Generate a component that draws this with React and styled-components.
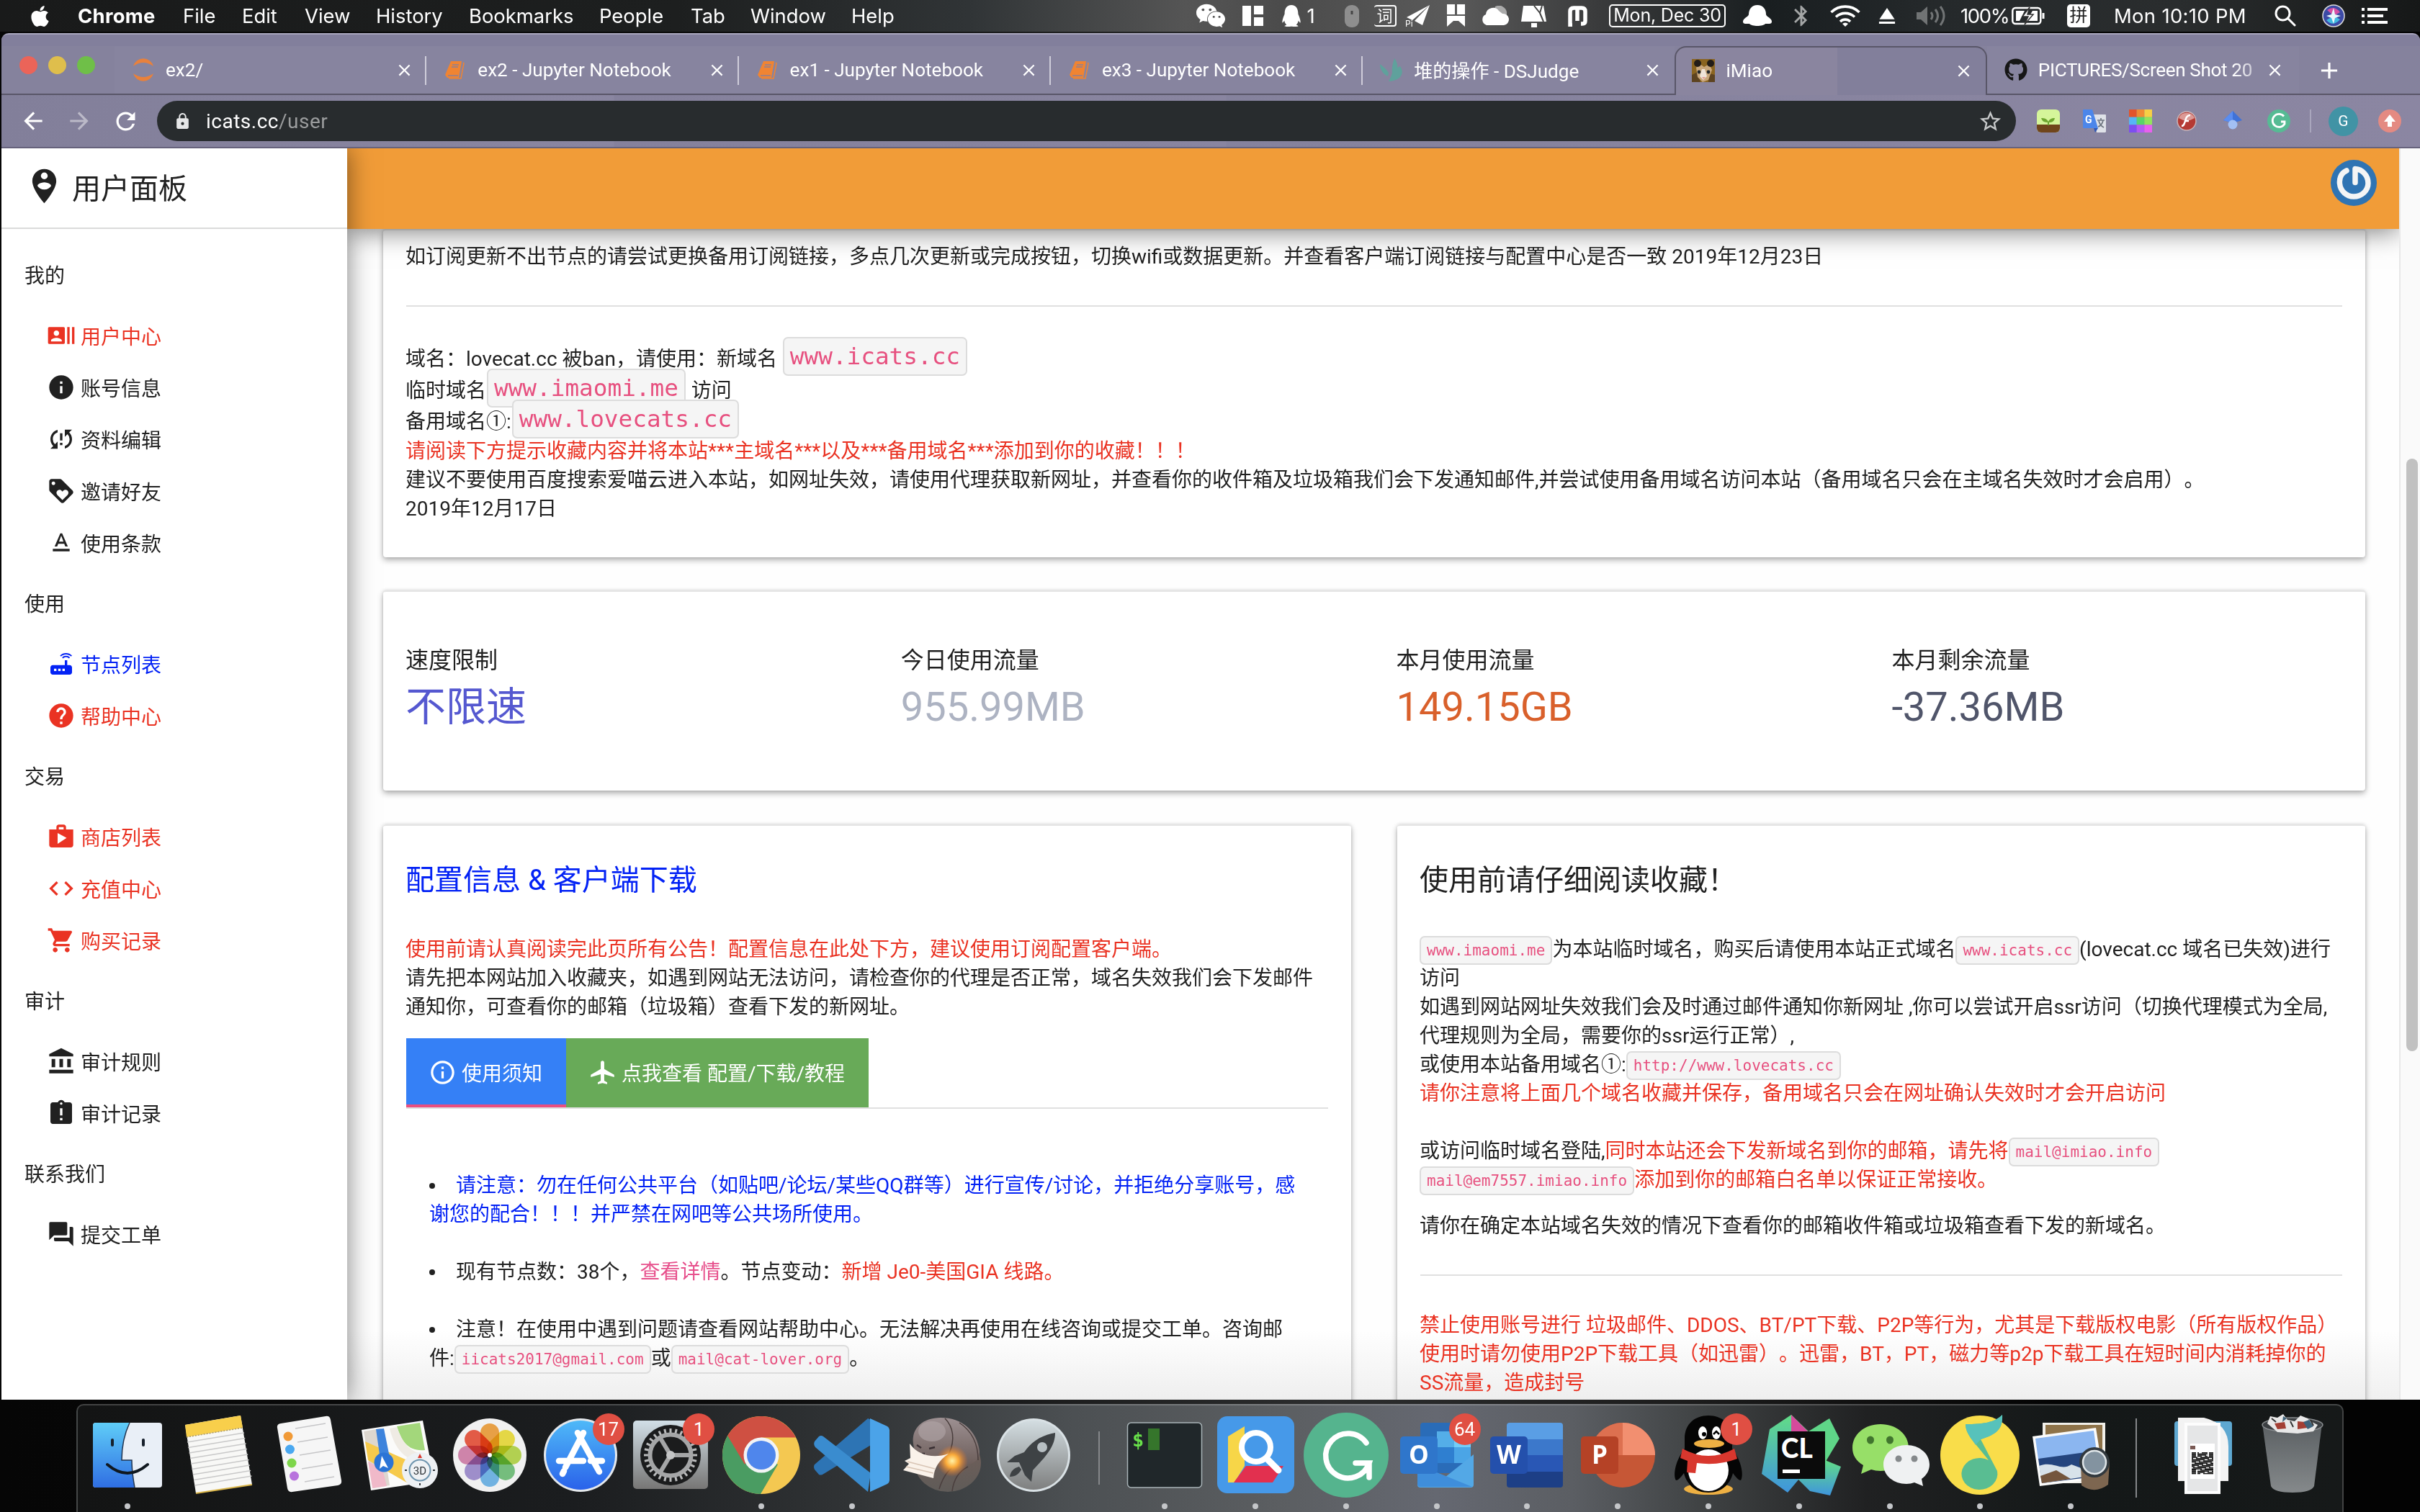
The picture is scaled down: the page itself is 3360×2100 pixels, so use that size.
import React from 'react';
import styled, { createGlobalStyle, css } from 'styled-components';
import {
  MdRecentActors, MdInfo, MdSyncProblem, MdLoyalty, MdTextFormat, MdRouter, MdHelp, MdShop, MdCode,
  MdShoppingCart, MdAccountBalance, MdAssignmentLate, MdQuestionAnswer, MdPersonPinCircle,
  MdOutlineInfo, MdLocalAirport, MdLock, MdStarBorder, MdEject, MdBluetooth, MdClose, MdAdd,
  MdArrowBack, MdArrowForward, MdRefresh,
} from 'react-icons/md';
import { FaApple, FaGithub, FaWeixin, FaQq } from 'react-icons/fa';

const Global = createGlobalStyle`
  * { box-sizing: border-box; }
  html, body { margin: 0; padding: 0; background: #000; overflow: hidden; }
  body { font-family: Roboto, "Noto Sans CJK SC", sans-serif; color: #212121; text-spacing-trim: space-all; }
  svg { display: block; flex: none; }
`;

const Desktop = styled.div`
  width: 3360px;
  height: 2100px;
  display: flex;
  flex-direction: column;
  background: linear-gradient(90deg, #060606 0%, #0a0a0a 30%, #2c2d2e 55%, #1c1c1c 70%, #030303 85%);
  overflow: hidden;
`;

/* ---------- system menu bar ---------- */
const MenuBar = styled.header`
  height: 44px;
  flex: none;
  display: flex;
  align-items: center;
  color: #fff;
  font-family: Inter, "Noto Sans CJK SC", sans-serif;
  font-size: 27.4px;
  background: linear-gradient(90deg, #191a1a 0%, #1d1f1f 28%, #303436 40%, #555 49%, #4b4b4b 53%, #5a5a5a 60%, #3a3b3c 66%, #191e20 73%, #25292b 80%, #2a2d2e 90%, #161818 100%);
`;
const Slot = styled.div`
  width: ${(p) => p.$w}px;
  margin-left: ${(p) => p.$ml || 0}px;
  flex: none;
  height: 44px;
  display: flex;
  align-items: center;
  justify-content: ${(p) => (p.$left ? 'flex-start' : 'center')};
  white-space: nowrap;
  font-weight: ${(p) => (p.$bold ? 700 : 400)};
  letter-spacing: ${(p) => p.$ls || 0}px;
  opacity: ${(p) => p.$o || 1};
`;
const DateBox = styled.span`
  width: 162px;
  height: 32px;
  border: 2.5px solid #fff;
  border-radius: 5px;
  font-size: 25px;
  line-height: 27px;
  text-align: center;
  letter-spacing: -0.2px;
`;
const InputBox = styled.span`
  width: 32px;
  height: 32px;
  background: #fff;
  color: #222;
  border-radius: 5px;
  font-size: 25px;
  line-height: 31px;
  text-align: center;
`;
const OutlineGlyph = styled.span`
  width: 31px;
  height: 30px;
  border: 2px solid #fff;
  border-left: 0;
  border-radius: 4px;
  font-size: 22px;
  line-height: 27px;
  text-align: center;
`;

/* ---------- browser ---------- */
const Browser = styled.div`
  height: 1898px;
  margin: 2px 0 0 2px;
  flex: none;
  display: flex;
  flex-direction: column;
  background: #85829d;
  border-top: 2px solid #aaa8bf;
  border-radius: 10px 10px 0 0;
  overflow: hidden;
`;
const TabStrip = styled.div`
  height: 84px;
  flex: none;
  display: flex;
  align-items: flex-end;
  background: linear-gradient(180deg, #827f9c 0 16px, #85829d 16px);
`;
const Lights = styled.div`
  width: 157px;
  height: 84px;
  padding-left: 25px;
  flex: none;
  display: flex;
  align-items: center;
  gap: 15px;
  box-shadow: inset 0 -2px #595668;
`;
const Light = styled.span`
  width: 25px;
  height: 25px;
  border-radius: 50%;
  background: ${(p) => p.$c};
`;
const TabItem = styled.div`
  width: 433.3px;
  height: 68px;
  flex: none;
  display: flex;
  align-items: center;
  padding: 0 ${(p) => (p.$fade ? 20 : 17)}px 2px 24px;
  color: #fff;
  background: #87849f;
  font-size: 26.1px;
  ${(p) =>
    p.$active
      ? css`
          border: 2px solid #595668;
          border-bottom: 0;
          border-radius: 16px 16px 0 0;
          background: linear-gradient(90deg, #8a859f 0 52%, #827f9b 52%);
          padding-left: 22px;
        `
      : css`
          box-shadow: inset 0 -2px #595668;
        `}
`;
const TabIcon = styled.span`
  width: 32px;
  height: 32px;
  margin-right: 15px;
  flex: none;
`;
const TabTitle = styled.span`
  flex: 1;
  white-space: nowrap;
  ${(p) => p.$fade && css`
    letter-spacing: -0.35px;
    mask-image: linear-gradient(90deg, #000 86%, rgba(0, 0, 0, 0.3) 100%);
  `}
`;
const TabDivider = styled.span`
  width: 2px;
  height: 40px;
  margin-left: -2px;
  margin-bottom: 14px;
  background: #cfcdda;
  z-index: 1;
`;
const StripEnd = styled.div`
  flex: 1;
  height: 68px;
  display: flex;
  align-items: center;
  padding-left: 23px;
  box-shadow: inset 0 -2px #595668;
  color: #fff;
`;
const Toolbar = styled.div`
  height: 74px;
  flex: none;
  display: flex;
  align-items: center;
  color: #fff;
  padding-left: 24px;
  background: linear-gradient(90deg, #827f9a 0, #8a86a1 850px, #85819c 851px, #8985a0 1700px, #85829d 1701px, #8b86a2 100%);
  border-bottom: 2px solid #66627c;
`;
const NavButton = styled.span`
  width: 40px;
  margin-right: 24px;
  flex: none;
  display: flex;
  justify-content: center;
  opacity: ${(p) => (p.$dim ? 0.45 : 1)};
`;
const Omnibox = styled.div`
  width: 2581px;
  height: 56px;
  flex: none;
  display: flex;
  align-items: center;
  padding: 0 18px 0 23px;
  border-radius: 28px;
  background: #282c2e;
  color: #fff;
  font-size: 28px;
`;
const Address = styled.span`
  flex: 1;
  margin-left: 20px;
  letter-spacing: 0.5px;
`;
const Muted = styled.span`
  color: #9b9d9e;
`;
const Extensions = styled.div`
  display: flex;
  align-items: center;
  gap: 32px;
  margin-left: 29px;
`;
const ExtDivider = styled.span`
  width: 2px;
  height: 32px;
  margin: 0 -8px 0 -5px;
  background: #a9a6bd;
`;
const Avatar = styled.span`
  width: 41px;
  height: 41px;
  border-radius: 50%;
  background: #4193a5;
  font-size: 21px;
  line-height: 41px;
  text-align: center;
  margin-right: -4px;
`;

/* ---------- page ---------- */
const Page = styled.div`
  height: 1738px;
  flex: none;
  display: flex;
  background: #fff;
`;
const Sidebar = styled.nav`
  width: 480px;
  flex: none;
  position: relative;
  z-index: 3;
  background: #fff;
  box-shadow: 0 0 34px rgba(0, 0, 0, 0.5);
  clip-path: inset(0 -60px 0 0);
`;
const Brand = styled.div`
  height: 112px;
  display: flex;
  align-items: center;
  padding: 0 0 5px 31px;
  border-bottom: 2px solid #dadbda;
  font-size: 40px;
  margin-bottom: 18px;
`;
const BrandText = styled.span`
  margin: 1px 0 0 10px;
`;
const GroupTitle = styled.div`
  height: 96px;
  padding-left: 32px;
  font-size: 28px;
  line-height: 96px;
`;
const MenuLink = styled.div`
  height: 72px;
  display: flex;
  align-items: center;
  padding: 1px 0 0 63px;
  font-size: 28px;
  line-height: 71px;
  color: ${(p) => p.$c || '#212121'};
  svg { margin: -6px 7px 0 0; }
`;
const Main = styled.div`
  flex: 1;
  min-width: 0;
  display: flex;
  flex-direction: column;
`;
const TopBar = styled.div`
  height: 112px;
  flex: none;
  position: relative;
  z-index: 2;
  display: flex;
  justify-content: flex-end;
  padding: 16px 31px 0 0;
  background: #f19c38;
  box-shadow: 0 4px 34px rgba(0, 0, 0, 0.5);
  clip-path: inset(0 0 -60px 0);
`;
const Content = styled.main`
  flex: 1;
  display: flex;
  flex-direction: column;
  padding: 0 47px 0 50px;
  overflow: hidden;
  background: linear-gradient(180deg, #fefefe 1530px, #f0f0f0 1626px);
`;
const Card = styled.section`
  height: ${(p) => p.$h}px;
  width: ${(p) => (p.$w ? `${p.$w}px` : 'auto')};
  margin-bottom: ${(p) => p.$mb || 0}px;
  flex: none;
  padding: ${(p) => p.$pt}px 32px 0 31px;
  border-top: 2px solid #e5e5e5;
  border-radius: 4px;
  background: ${(p) => (p.$shade ? 'linear-gradient(180deg, #fff 700px, #eeeeee 799px)' : '#fff')};
  box-shadow: 0 4px 8px rgba(0, 0, 0, 0.3), 0 0 4px rgba(0, 0, 0, 0.12);
`;
const Columns = styled.div`
  display: flex;
  justify-content: space-between;
`;
const Line = styled.div`
  height: ${(p) => p.$h || 40}px;
  margin-top: ${(p) => p.$mt || 0}px;
  display: flex;
  align-items: center;
  white-space: pre;
  font-size: 28px;
  line-height: 40px;
  color: ${(p) => p.$c || 'inherit'};
`;
const Tint = styled.span`
  color: ${(p) => p.$c};
`;
const Chip = styled.code`
  height: ${(p) => (p.$big ? 54 : 40)}px;
  margin: ${(p) => (p.$big ? '-8px 1px 0' : '2px 0 0')};
  flex: none;
  display: flex;
  align-items: center;
  padding: 0 8px;
  border: 2px solid #dcdcdc;
  border-radius: 7px;
  background: #f5f5f5;
  color: #e7507f;
  font-family: "DejaVu Sans Mono", monospace;
  font-size: ${(p) => (p.$big ? 32.7 : 21)}px;
`;
const Rule = styled.hr`
  height: 2px;
  margin: ${(p) => p.$mt}px 0 0 1px;
  border: 0;
  background: #e0e0e0;
`;
const Heading = styled.h2`
  height: 60px;
  margin: 0 0 46px;
  font-size: 40px;
  font-weight: 400;
  line-height: 60px;
  color: ${(p) => p.$c || 'inherit'};
`;
const Stats = styled.div`
  display: grid;
  grid-template-columns: repeat(4, 687.8px);
`;
const StatLabel = styled.div`
  font-size: 32px;
  line-height: 48px;
`;
const StatValue = styled.div`
  margin-top: 1px;
  font-size: 56px;
  line-height: 80px;
  color: ${(p) => p.$c};
`;
const TabBar = styled.div`
  height: 98px;
  margin: 23px 0 0 1px;
  display: flex;
  border-bottom: 2px solid #e0e0e0;
  color: #fff;
  font-size: 28px;
`;
const TabButton = styled.div`
  width: ${(p) => p.$w}px;
  height: 96px;
  display: flex;
  align-items: center;
  padding: 0 0 2px 31px;
  background: ${(p) => p.$bg};
  box-shadow: ${(p) => (p.$active ? 'inset 0 -4px #ea4f80' : 'none')};
  white-space: nowrap;
  svg { margin-right: 7px; }
`;
const Notices = styled.div`
  padding: 87px 0 0 33px;
`;
const Bullet = styled.span`
  width: 8px;
  height: 8px;
  margin-right: 29px;
  border-radius: 50%;
  background: #212121;
`;
const ScrollTrack = styled.div`
  width: 29px;
  flex: none;
  padding: 431px 0 0 8px;
  border-left: 2px solid #e8e8e8;
  background: #fafafa;
`;
const ScrollThumb = styled.div`
  width: 16px;
  height: 823px;
  border-radius: 8px;
  background: #c1c1c1;
`;

/* ---------- dock ---------- */
const Dock = styled.footer`
  width: 3148px;
  height: 150px;
  margin: 6px 0 0 106px;
  padding-left: 5.6px;
  flex: none;
  display: flex;
  border: 2px solid rgba(255, 255, 255, 0.2);
  border-bottom: 0;
  border-radius: 10px 10px 0 0;
  background: linear-gradient(90deg, #131414 0%, #1b1d1f 22%, #303335 34%, #4c5053 44%, #5b5e61 53%, #656871 60%, #5b5e63 66%, #3e4142 72%, #202122 79%, #141818 88%, #161919 100%);
`;
const DockSlot = styled.div`
  width: 125.8px;
  height: 148px;
  margin-top: -2px;
  flex: none;
  position: relative;
`;
const RunDot = styled.span`
  position: absolute;
  left: 59px;
  top: 138px;
  width: 8px;
  height: 8px;
  border-radius: 50%;
  background: #c4c6c9;
`;
const DockBadge = styled.span`
  position: absolute;
  left: 80px;
  top: 13px;
  width: 44px;
  height: 44px;
  border-radius: 22px;
  background: #e04f43;
  color: #fff;
  font-size: 26px;
  line-height: 44px;
  text-align: center;
`;
const DockDivider = styled.span`
  width: 2px;
  height: ${(p) => p.$h}px;
  margin: ${(p) => p.$mt}px 27.4px 0;
  flex: none;
  background: #85878a;
`;

const RED = '#ea3323';
const BLUE = '#0322f5';

/* ---------- small drawings ---------- */
const JupyterRing = () => (
  <svg width="32" height="32" viewBox="0 0 32 32">
    <path d="M2 11a14.5 14.5 0 0 1 28 0Q16 1 2 11zM2 21a14.5 14.5 0 0 0 28 0Q16 31 2 21z" fill="#e8813c" />
  </svg>
);
const NotebookIcon = () => (
  <svg width="32" height="32" viewBox="0 0 32 32" fill="#f08432">
    <path d="M10 4h15l-4 23H5l-3-4z" />
    <path d="M27 6l1 1-4 21H7" fill="none" stroke="#f08432" strokeWidth="1.5" />
    <path d="M12 9h9M11 12h9M6 24h14" stroke="#8a7f96" strokeWidth="1.6" />
  </svg>
);
const JudgeIcon = () => (
  <svg width="32" height="32" viewBox="0 0 32 32" fill="#5fa19c">
    <path d="M0 8c4 3 9 7 12 12l-1 5C4 22 0 15 0 8zM20 0c3 4 5 9 4 13l4-2c5 7 3 14-4 18-4 2-9 3-12 3 2-4 4-8 5-12-1-7 1-14 3-20z" />
  </svg>
);
const CatIcon = () => (
  <svg width="32" height="32" viewBox="0 0 32 32">
    <rect width="32" height="32" fill="#8a6420" />
    <path d="M0 22l8-4 4 14H0zM24 20l8 2v10h-9z" fill="#5d4320" />
    <path d="M6 12l4-6 7 5 7-4 4 8-5 14-8 3-7-7z" fill="#c9a77c" />
    <path d="M14 14l4 0 3 10-5 5-5-5z" fill="#efe4da" />
    <ellipse cx="8" cy="6" rx="5" ry="5" fill="#221c18" />
    <ellipse cx="26" cy="6" rx="5" ry="5" fill="#221c18" />
    <circle cx="10" cy="18" r="2.4" fill="#20262b" />
    <circle cx="23" cy="18" r="2.4" fill="#20262b" />
    <path d="M14 25h5l-2.500 3z" fill="#e59a94" />
  </svg>
);
const PowerLogo = () => (
  <svg width="64" height="64" viewBox="0 0 64 64">
    <circle cx="32" cy="32" r="32" fill="#2f74b3" />
    <path d="M22 15C13 19 12 28 12.500 33c1 10 9 18 19.500 18s20-8 20-18.500C52 22 44 13 34 12.500v19" fill="none" stroke="#f4f5f5" strokeWidth="7.500" strokeLinecap="round" strokeLinejoin="round" />
  </svg>
);

const ext = [
  <svg key="a" width="32" height="32" viewBox="0 0 32 32">
    <rect width="32" height="32" rx="6" fill="#d5f59a" />
    <path d="M0 21h32v5a6 6 0 0 1-6 6H6a6 6 0 0 1-6-6z" fill="#70451b" />
    <path d="M15 22v-4C9 18 7 15 6 12c5 0 8 1 10 5 1-3 4-5 9-5-1 4-3 6-8 6v4z" fill="#6ea62f" />
  </svg>,
  <svg key="b" width="32" height="32" viewBox="0 0 32 32">
    <path d="M14 7h17a1 1 0 0 1 1 1v23l-1 1H19z" fill="#dfe2e8" />
    <path d="M0 0h13l8 26H1a1 1 0 0 1-1-1z" fill="#4c86ea" />
    <path d="M15 26h6l-4 6z" fill="#3058b5" />
    <path d="M20 15h10M25 12v3m3 0c-1 5-4 8-7 9m1-8c1 4 3 7 7 9" stroke="#6f7680" strokeWidth="1.700" fill="none" />
    <text x="3" y="19" fontFamily="Roboto" fontWeight="700" fontSize="14" fill="#fff">G</text>
  </svg>,
  <svg key="c" width="32" height="32" viewBox="0 0 32 32">
    {['#e2542c', '#ef8c34', '#f6cf45', '#57b5f5', '#58d46b', '#92e35b', '#7d4ef0', '#b45af3', '#e860ee'].map((c, i) => (
      <rect key={c} x={(i % 3) * 10.7} y={Math.floor(i / 3) * 10.7} width="10.7" height="10.7" fill={c} />
    ))}
  </svg>,
  <svg key="d" width="32" height="32" viewBox="0 0 32 32">
    <circle cx="16" cy="16" r="13" fill="#b53a33" stroke="#c9b4b8" strokeWidth="1.500" />
    <path d="M5 12a12 12 0 0 1 22 0q-11 7-22 0z" fill="#dc9a96" />
    <path d="M21 8c-6 0-6 6-8 11-1 3-2 4-4 4M13 16h6" fill="none" stroke="#fff" strokeWidth="2.500" />
  </svg>,
  <svg key="e" width="32" height="32" viewBox="0 0 32 32">
    <path d="M16 2l13 13-13 4L3 15z" fill="#3f72d8" />
    <path d="M16 2v17L3 15z" fill="#5a8df0" />
    <circle cx="16" cy="21" r="6.500" fill="#a3c0f4" />
  </svg>,
  <svg key="f" width="32" height="32" viewBox="0 0 32 32">
    <circle cx="16" cy="16" r="16" fill="#56bb94" />
    <path d="M23 9.500A9 9 0 1 0 24 20v-3h-5" fill="none" stroke="#fff" strokeWidth="2.800" />
  </svg>,
];

/* ---------- dock icon drawings, on a 126 x 150 slot ---------- */
const petals = ['#f5a94a', '#f2e44a', '#bddc55', '#7cc884', '#78bdee', '#a796d6', '#da8cb4', '#f0604a'];
const teeth = Array.from({ length: 28 }, (_, i) => (i * 360) / 28);
const isCorner = (x, y) => (x < 4 && y < 4) || (x > 10 && y < 4) || (x < 4 && y > 14);
const qrCells = Array.from({ length: 15 * 19 }, (_, i) => [i % 15, Math.floor(i / 15)])
  .filter(([x, y]) => (isCorner(x, y) ? x % 4 !== 3 : (x * x * 3 + y * y * 5 + x * y * 7) % 11 < 6));
const art = {
  finder: (
    <>
      <rect x="15" y="26" width="96" height="90" rx="4" fill="#e9eff7" />
      <path d="M19 26h47c-8 17-11 35-11 52h14c0 13 2 27 4 38H19a4 4 0 0 1-4-4V30a4 4 0 0 1 4-4z" fill="url(#gFinder)" />
      <path d="M66 26c-8 17-11 35-11 52h14c0 13 2 27 4 38" fill="none" stroke="#20344f" strokeWidth="1.500" />
      <path d="M42 50v7M85 50v7" stroke="#16202c" strokeWidth="4" strokeLinecap="round" />
      <path d="M35 84q28 24 56 0" fill="none" stroke="#101820" strokeWidth="4" strokeLinecap="round" />
    </>
  ),
  notes: (
    <>
      <path d="M18 29l77-13 16 96-78 12z" fill="#f8f8f6" />
      <path d="M18 29l77-13 3 17-78 13z" fill="#f8cf4b" />
      <path d="M20 46l78-13" stroke="#a89a70" strokeWidth="1.500" strokeDasharray="2 2" />
      {Array.from({ length: 9 }, (_, i) => (
        <path key={i} d={`M${21 + i * 1.3} ${53 + i * 7.5}l79-13`} stroke="#c9c9c9" strokeWidth="1.500" />
      ))}
      <path d="M33 124l78-12" stroke="#d9b549" strokeWidth="2" />
    </>
  ),
  reminders: (
    <>
      <path d="M25 27l62-10q6-1 7 5l15 84q1 6-5 7l-63 9q-6 1-7-5L20 33q-1-5 5-6z" fill="#f6f6f6" />
      {[['#f19a37', 35, 45], ['#4aa8f0', 37.5, 63], ['#7ed64b', 40, 82], ['#b873dd', 43.5, 100]].map(([c, x, y]) => (
        <circle key={c} cx={x} cy={y} r="6.500" fill={c} />
      ))}
      <path d="M45 34l42-7M48 53l42-7M51 71l43-7M54 90l43-7M58 108l41-7" stroke="#c6c6c8" strokeWidth="1.500" />
    </>
  ),
  maps: (
    <>
      <path d="M11 36l85-13 16 84-88 13z" fill="#fbfbfa" />
      <path d="M14 38l24-4 12 79-23 4z" fill="#ddd7cf" />
      <path d="M16 52l76 34 12 21-27 4L20 78z" fill="#f6ca4c" />
      <path d="M60 31l32-5 7 38c-24 2-32-12-39-33z" fill="#a3d77b" />
      <path d="M50 34l10-2c7 21 20 38 40 37l2 14c-30-3-45-20-52-49z" fill="#efebe4" />
      <path d="M20 80l20 10 6 24-20 3z" fill="#f0b9c9" />
      <path d="M31 35l11-1 10 50H38z" fill="#3d83dc" />
      <circle cx="42" cy="81" r="13.500" fill="#2b74d6" />
      <path d="M39 72l9 17-7-3-5 4z" fill="#fff" />
      <circle cx="92" cy="92" r="25" fill="#eef1f4" />
      <circle cx="92" cy="92" r="14.500" fill="none" stroke="#6c93ad" strokeWidth="2" />
      <path d="M92 69l3 6h-6z" fill="#d9372c" />
      <path d="M71 92h3M110 92h3M92 110v3" stroke="#30363b" strokeWidth="2" />
      <text x="92" y="98" textAnchor="middle" fontFamily="Roboto" fontSize="15" fill="#30363b">3D</text>
    </>
  ),
  photos: (
    <>
      <circle cx="63" cy="71" r="51" fill="#f1f1f1" />
      {petals.map((c, i) => (
        <rect key={c} x="50" y="27" width="26" height="44" rx="13" fill={c} style={{ mixBlendMode: 'multiply' }} transform={`rotate(${i * 45} 63 71)`} />
      ))}
      <circle cx="63" cy="71" r="3" fill="#fff" />
    </>
  ),
  appstore: (
    <>
      <circle cx="63" cy="71" r="51" fill="#e4e8ec" />
      <circle cx="63" cy="71" r="48" fill="url(#gStore)" />
      <path d="M67 40L42 88M59 40l30 54M33 79h34M77 79h16M40 93l-2 4" stroke="#fff" strokeWidth="8.500" strokeLinecap="round" fill="none" />
    </>
  ),
  prefs: (
    <>
      <rect x="11" y="23" width="104" height="95" rx="5" fill="url(#gPref)" />
      <circle cx="63" cy="71" r="42" fill="#1b1c1d" />
      {teeth.map((a) => (
        <rect key={a} x="61.500" y="34" width="3" height="8" fill="#b9babb" transform={`rotate(${a} 63 71)`} />
      ))}
      <circle cx="63" cy="71" r="28.500" fill="none" stroke="#a5a6a7" strokeWidth="6" />
      <path d="M63 71h28M63 71L48 46M63 71L48 96" stroke="#a5a6a7" strokeWidth="6" />
      <circle cx="63" cy="71" r="6" fill="#c4c5c6" />
    </>
  ),
  chrome: (
    <>
      <circle cx="63" cy="71" r="54" fill="#f4c851" />
      <path d="M63 71L16.200 44A54 54 0 0 0 62 125l24-41z" fill="#4a9c62" />
      <path d="M63 46.500h48A54 54 0 0 0 16.200 44L40 84z" fill="#cf5042" />
      <circle cx="63" cy="71" r="24.500" fill="#f2f4f5" />
      <circle cx="63" cy="71" r="20" fill="#4f86ec" />
    </>
  ),
  vscode: (
    <>
      <path d="M11 84l74-64 9 4v30L22 98q-3 1-5 0l-6-7q-2-4 0-7z" fill="#2d74b4" />
      <path d="M11 52l6-7q3-2 6 0l66 51-4 26L12 60q-3-4-1-8z" fill="#3a8ccf" />
      <path d="M88 20l24 11q3 2 3 5v70q0 3-3 5l-24 11z" fill="#4ba3e9" />
    </>
  ),
  bear: (
    <>
      <ellipse cx="70" cy="82" rx="46" ry="40" fill="url(#gBody)" />
      <path d="M22 55c-3-22 14-36 38-36 30 0 50 18 54 46 1 14-8 22-44 22S24 72 22 55z" fill="url(#gHead)" />
      <ellipse cx="48" cy="38" rx="19" ry="14" fill="#b3a6a8" opacity="0.600" />
      <path d="M66 20c12 12 14 30 6 48M86 26c18 12 26 30 26 52M58 118c6-20 16-30 26-34M76 121c2-16 10-28 22-34" fill="none" stroke="#4a3e3d" strokeWidth="1.500" />
      <path d="M27 57l6 4M52 60l-8 2M34 69h4" stroke="#3a2f33" strokeWidth="2.500" />
      <circle cx="76" cy="79" r="22" fill="url(#gFire)" />
      <path d="M17 55c12 17 34 21 54 14-14 10-20 20-21 34l-42-11 8-9-6-4 8-4z" fill="#faf2ea" />
      <path d="M14 80l38 10M12 87l38 9" stroke="#d8c4b4" strokeWidth="1.500" />
    </>
  ),
  launchpad: (
    <>
      <circle cx="63" cy="71" r="51" fill="#d9e1e5" />
      <circle cx="63" cy="71" r="48" fill="url(#gLaunch)" />
      <path d="M93 40C74 43 59 53 50 67l-13 5-11 9 17 0 8 18 9 9 2-16 11-12c12-13 20-25 20-40zM43 87c-8 2-12 7-13 14 8 0 13-4 16-10z" fill="#3e4245" />
      <circle cx="75" cy="60" r="7" fill="#b7bfc3" />
    </>
  ),
  terminal: (
    <>
      <rect x="11.500" y="26" width="103" height="90" rx="5" fill="#20272a" stroke="#a9b4b8" strokeWidth="1.500" />
      <rect x="40" y="34" width="16" height="30" fill="#35752b" />
      <text x="18" y="59" fontFamily="DejaVu Sans Mono" fontSize="27" fontWeight="700" fill="#68e04a">$</text>
    </>
  ),
  search: (
    <>
      <rect x="10" y="17" width="107" height="107" rx="14" fill="#4699e9" />
      <path d="M25 45l23-14v55l-14 23h-9z" fill="#f7d648" />
      <path d="M33 109l17-23h52l-15 23z" fill="#e2304f" />
      <circle cx="64" cy="60" r="20" fill="#4699e9" stroke="#fff" strokeWidth="8" />
      <path d="M81 78l14 14" stroke="#fff" strokeWidth="9" strokeLinecap="round" />
    </>
  ),
  grammarly: (
    <>
      <circle cx="63" cy="71" r="59" fill="#55b48e" />
      <path d="M91 54a31 31 0 1 0 4 28h-19M95 82v20" fill="none" stroke="#fff" strokeWidth="7.500" strokeLinecap="round" />
    </>
  ),
  outlook: (
    <>
      <rect x="40" y="26" width="70" height="70" rx="4" fill="#2a6cb8" />
      <rect x="63" y="38" width="24" height="22" fill="#54aee8" />
      <rect x="87" y="38" width="23" height="22" fill="#72cdf8" />
      <rect x="63" y="60" width="24" height="22" fill="#2f7fd0" />
      <rect x="87" y="60" width="23" height="22" fill="#4ba5e6" />
      <path d="M36 84l38 18 40-32v42a4 4 0 0 1-4 4H40a4 4 0 0 1-4-4z" fill="#53a8e6" />
      <path d="M36 84l76 31H40a4 4 0 0 1-4-4z" fill="#3f8edb" />
      <rect x="12" y="45" width="52" height="52" rx="5" fill="#2f76cb" />
      <text x="38" y="83" textAnchor="middle" fontFamily="Open Sans" fontWeight="700" fontSize="35" fill="#fff">O</text>
    </>
  ),
  word: (
    <>
      <path d="M39 26h70a4 4 0 0 1 4 4v19H35V30a4 4 0 0 1 4-4z" fill="#5a9ee5" />
      <path d="M35 49h78v22H35z" fill="#3c78cb" />
      <path d="M35 71h78v23H35z" fill="#2957b5" />
      <path d="M35 94h78v18a4 4 0 0 1-4 4H39a4 4 0 0 1-4-4z" fill="#1d3f86" />
      <rect x="12" y="45" width="52" height="52" rx="5" fill="#2450ac" />
      <text x="38" y="83" textAnchor="middle" fontFamily="Open Sans" fontWeight="700" fontSize="35" fill="#fff">W</text>
    </>
  ),
  ppt: (
    <>
      <circle cx="70" cy="71" r="45" fill="#c65736" />
      <path d="M70 26a45 45 0 0 1 45 45H70z" fill="#f28f70" />
      <path d="M70 26v45H25a45 45 0 0 1 45-45z" fill="#dd7050" />
      <rect x="12" y="45" width="52" height="52" rx="5" fill="#b54226" />
      <text x="38" y="83" textAnchor="middle" fontFamily="Open Sans" fontWeight="700" fontSize="35" fill="#fff">P</text>
    </>
  ),
  qq: (
    <>
      <ellipse cx="63" cy="118" rx="34" ry="8" fill="#eeb043" />
      <path d="M30 62C16 80 14 100 18 106q4 0 11-10c4 16 16 27 34 27s30-11 34-27q7 10 11 10c4-6 2-26-12-44V48C96 28 82 16 63 16S30 28 30 48z" fill="#050505" />
      <ellipse cx="63" cy="92" rx="28" ry="29" fill="#fff" />
      <path d="M27 62q36 20 72 0l4 14q-26 10-56 6l-2 14-12-1 1-16-10-4z" fill="#d8372e" />
      <ellipse cx="55" cy="40" rx="6" ry="9" fill="#fff" />
      <ellipse cx="74" cy="40" rx="6" ry="9" fill="#fff" />
      <circle cx="57" cy="42" r="3" fill="#000" />
      <path d="M70 42l4-4 4 4" stroke="#000" strokeWidth="2.500" fill="none" />
      <ellipse cx="64" cy="55" rx="21" ry="6" fill="#eeb043" />
    </>
  ),
  clion: (
    <>
      <path d="M52 15L22 35 11 97l36 26 16-19h20z" fill="url(#gClion)" />
      <path d="M52 15l24 23 29-18 14 28-18 30v26l-40-20-9-30z" fill="#5fd688" />
      <path d="M99 78l22 9-15 40-28-6-17-17z" fill="url(#gClion)" />
      <path d="M52 15l24 24H52z" fill="#d64a9c" />
      <rect x="33" y="38" width="66" height="66" fill="#0b0b0b" />
      <text x="38" y="75" fontFamily="Lato" fontWeight="900" fontSize="37" fill="#fff">CL</text>
      <rect x="40" y="91" width="24" height="5" fill="#fff" />
    </>
  ),
  wechat: (
    <>
      <path d="M50 28c22 0 39 14 39 33S72 93 50 93q-7 0-13-2l-14 6 3-12C16 79 11 71 11 61c0-19 17-33 39-33z" fill="#97df68" />
      <ellipse cx="36" cy="50" rx="5" ry="5.500" fill="#41752e" />
      <ellipse cx="63" cy="50" rx="5" ry="5.500" fill="#41752e" />
      <path d="M86 57c18 0 32 12 32 27 0 8-4 15-11 20l2 10-12-5q-5 2-11 2c-18 0-32-12-32-27s14-27 32-27z" fill="#eff1f2" />
      <circle cx="75" cy="76" r="4.500" fill="#85898b" />
      <circle cx="97" cy="76" r="4.500" fill="#85898b" />
    </>
  ),
  music: (
    <>
      <circle cx="63" cy="71" r="55" fill="#f9dd4a" />
      <path d="M94 15c1 19-7 27-30 34l23 44a25 22 0 1 1-12-15L53 51c-7-9-10-16-10-23 24 0 40-2 51-13z" fill="#59bd92" />
      <path d="M94 15c1 19-7 27-30 34l-7 8-4-6c-7-9-10-16-10-23 24 0 40-2 51-13z" fill="#57c2bb" />
    </>
  ),
  preview: (
    <>
      <rect x="24" y="26" width="87" height="84" fill="#f1f0ea" />
      <rect x="28" y="29" width="79" height="78" fill="#8e7349" />
      <path d="M10 45l88-12 11 70-89 11z" fill="#fbfbfa" />
      <path d="M14 48l81-11 4 29-81 11z" fill="#8bb6f0" />
      <path d="M18 76l81-11 5 35-81 10z" fill="#24457e" />
      <path d="M19 86c20-8 30 8 45-2l38 14-79 12z" fill="#d7e2ea" />
      <path d="M21 100l22-8 20 12-40 6z" fill="#74563d" />
      <path d="M77 80l1 33q18 13 37-1l2-32z" fill="#7d6650" />
      <circle cx="96" cy="81" r="21" fill="#32393e" />
      <circle cx="96" cy="81" r="16" fill="#8393a0" stroke="#dfe5e8" strokeWidth="2.500" />
    </>
  ),
  stack: (
    <>
      <rect x="24" y="24" width="80" height="62" rx="4" fill="#5ea8d1" />
      <path d="M29 19h36q34 8 34 40v48H29z" fill="#f3f3f3" />
      <rect x="38" y="26" width="50" height="99" fill="#fdfdfd" />
      <rect x="42" y="30" width="42" height="91" fill="#e5e6e7" />
      <rect x="46" y="55" width="34" height="49" fill="#fff" />
      <rect x="46" y="58" width="7" height="5" fill="#7a5a55" />
      {qrCells.map(([x, y]) => (
        <rect key={`${x}-${y}`} x={48 + x * 2} y={67 + y * 1.6} width="2" height="1.600" fill="#1c1c1c" />
      ))}
    </>
  ),
  trash: (
    <>
      <path d="M21 27l83 0-11 87q-4 9-30 9t-30-9z" fill="url(#gTrash)" />
      <ellipse cx="63" cy="29" rx="42" ry="10" fill="#3b3f42" stroke="#8b8f92" strokeWidth="1.500" />
      <path d="M28 27l4-10 10 2 8-5 6 8 10 2 8-8 10 4 4 4 10 5-6 9-22 3-28-2z" fill="#e8e8e8" />
      <path d="M38 27l14-2 2 9-12 1zM70 24l10 1 4 8-14 2z" fill="#a33f34" />
      <path d="M78 25l8-3 6 9-8 4zM50 17l5 3-6 5z" fill="#3e627a" />
      <path d="M34 20l6 5M60 24l4 8M88 22l4 8" stroke="#333" strokeWidth="2" />
    </>
  ),
};

const GradientSheet = styled.svg`
  width: 0;
  height: 0;
`;
const Gradients = () => (
  <GradientSheet>
    <defs>
      {[
        ['gFinder', '#5fcdf8', '#2f6ee3'], ['gStore', '#4fb9f8', '#2a62ea'], ['gPref', '#d2dfe7', '#777675'],
        ['gLaunch', '#d3dde1', '#7e7f7f'], ['gClion', '#62dd86', '#3f95dd'], ['gTrash', '#5b6063', '#85898b'],
        ['gHead', '#9d9092', '#6b5c58'], ['gBody', '#75605a', '#5f5b58'],
      ].map(([id, a, b]) => (
        <linearGradient key={id} id={id} x1="0" y1="0" x2="0" y2="1">
          <stop offset="0" stopColor={a} />
          <stop offset="1" stopColor={b} />
        </linearGradient>
      ))}
      <radialGradient id="gFire">
        <stop offset="0" stopColor="#fff3a8" />
        <stop offset="0.4" stopColor="#fbab3a" />
        <stop offset="1" stopColor="#e0702a" stopOpacity="0" />
      </radialGradient>
    </defs>
  </GradientSheet>
);

function DockApp({ name, dot, badge }) {
  return (
    <DockSlot>
      <svg width="126" height="138" viewBox="0 0 126 138">{art[name]}</svg>
      {dot && <RunDot />}
      {badge && <DockBadge>{badge}</DockBadge>}
    </DockSlot>
  );
}

const groups = [
  ['我的', [
    [MdRecentActors, '用户中心', RED], [MdInfo, '账号信息'], [MdSyncProblem, '资料编辑'],
    [MdLoyalty, '邀请好友'], [MdTextFormat, '使用条款'],
  ]],
  ['使用', [[MdRouter, '节点列表', BLUE], [MdHelp, '帮助中心', RED]]],
  ['交易', [[MdShop, '商店列表', RED], [MdCode, '充值中心', RED], [MdShoppingCart, '购买记录', RED]]],
  ['审计', [[MdAccountBalance, '审计规则'], [MdAssignmentLate, '审计记录']]],
  ['联系我们', [[MdQuestionAnswer, '提交工单']]],
];

const stats = [
  ['速度限制', '不限速', '#5558d0'],
  ['今日使用流量', '955.99MB', '#adb3c2'],
  ['本月使用流量', '149.15GB', '#d9602b'],
  ['本月剩余流量', '-37.36MB', '#50556a'],
];

function BrowserTab({ icon, title, active, fade }) {
  return (
    <TabItem $active={active} $fade={fade}>
      <TabIcon>{icon}</TabIcon>
      <TabTitle $fade={fade}>{title}</TabTitle>
      <MdClose size={27} />
    </TabItem>
  );
}

function SystemMenu() {
  return (
    <MenuBar>
      <Slot $w={34} $ml={38}><FaApple size={33} /></Slot>
      <Slot $w={110} $ml={36} $left $bold $ls={0.3}>Chrome</Slot>
      <Slot $w={46} $ml={36} $left>File</Slot>
      <Slot $w={50} $ml={36} $left>Edit</Slot>
      <Slot $w={62} $ml={37} $left>View</Slot>
      <Slot $w={92} $ml={37} $left>History</Slot>
      <Slot $w={144} $ml={37} $left>Bookmarks</Slot>
      <Slot $w={88} $ml={37} $left>People</Slot>
      <Slot $w={46} $ml={39} $left>Tab</Slot>
      <Slot $w={104} $ml={37} $left>Window</Slot>
      <Slot $w={60} $ml={36} $left>Help</Slot>
      <Slot $w={42} $ml={418}><FaWeixin size={42} /></Slot>
      <Slot $w={31} $ml={22}>
        <svg width="29" height="28" viewBox="0 0 29 28" fill="#fff"><path d="M0 0h12v28H0zM16 0h13v12H16zM16 16h13v12H16z" /></svg>
      </Slot>
      <Slot $w={30} $ml={23}><FaQq size={30} /></Slot>
      <Slot $w={14} $ml={5}>1</Slot>
      <Slot $w={21} $ml={39} $o={0.35}>
        <svg width="20" height="31" viewBox="0 0 20 31"><rect width="20" height="31" rx="9" fill="#fff" /><path d="M10 8v5" stroke="#333" strokeWidth="3" /></svg>
      </Slot>
      <Slot $w={31} $ml={21}><OutlineGlyph>词</OutlineGlyph></Slot>
      <Slot $w={36} $ml={12}>
        <svg width="36" height="40" viewBox="0 0 36 40"><path d="M34 5L2 22l8 4zM34 5L13 27l11 6z" fill="#fff" /><text x="0" y="35" fontFamily="Inter" fontSize="12" fill="#fff">Pi</text></svg>
      </Slot>
      <Slot $w={26} $ml={21}>
        <svg width="25" height="32" viewBox="0 0 25 32" fill="#fff"><path d="M0 0h11v14H0zM14 0h11v14H14zM0 16h25v15l-9-8h-7l-9 8z" /></svg>
      </Slot>
      <Slot $w={40} $ml={22}>
        <svg width="40" height="28" viewBox="0 0 40 28"><path d="M20 1a11 11 0 0 1 16 8v10L18 8z" fill="#aaa" /><path d="M8 27a8 8 0 0 1-1-15 10 10 0 0 1 18-5l5 4a8 8 0 0 1 2 16z" fill="#fff" /></svg>
      </Slot>
      <Slot $w={38} $ml={15}>
        <svg width="36" height="31" viewBox="0 0 36 31" fill="#fff"><path d="M3 1h28l4 22H0zM14 25h8v6h-8z" /><path d="M18 1l8 10 3-10M26 11l5 12" stroke="#444" strokeWidth="2" fill="none" /></svg>
      </Slot>
      <Slot $w={30} $ml={27}>
        <svg width="28" height="30" viewBox="0 0 28 30" fill="none" stroke="#fff" strokeWidth="5.500"><path d="M6 28H3V9q0-5 5-5h5v18M13 4h6q5 0 5 5v13q0 4-4 4h-2" /></svg>
      </Slot>
      <Slot $w={162} $ml={28}><DateBox>Mon, Dec 30</DateBox></Slot>
      <Slot $w={42} $ml={23}>
        <svg width="42" height="30" viewBox="0 0 42 30" fill="#fff"><path d="M21 0c8 0 12 6 12 13 0 3 8 5 8 10 0 4-5 3-9 3-3 4-19 4-22 0-4 0-9 1-9-3 0-5 8-7 8-10C9 6 13 0 21 0z" /></svg>
      </Slot>
      <Slot $w={26} $ml={27} $o={0.6}><MdBluetooth size={34} /></Slot>
      <Slot $w={44} $ml={26}>
        <svg width="42" height="30" viewBox="0 0 42 30" fill="none" stroke="#fff" strokeWidth="3.600"><path d="M1.500 10a28 28 0 0 1 39 0M8 16.500a19 19 0 0 1 26 0M14 23a10 10 0 0 1 14 0" /><path d="M17 26a6 6 0 0 1 8 0l-4 4z" fill="#fff" stroke="none" /></svg>
      </Slot>
      <Slot $w={28} $ml={22}><MdEject size={38} /></Slot>
      <Slot $w={42} $ml={26} $o={0.35}>
        <svg width="42" height="32" viewBox="0 0 42 32" fill="none" stroke="#fff" strokeWidth="3"><path d="M1 11h6l9-8v26l-9-8H1z" fill="#fff" stroke="none" /><path d="M21 11q4 5 0 10M27 7q7 9 0 18M34 3q10 13 0 26" /></svg>
      </Slot>
      <Slot $w={64} $ml={20} $left $ls={-1.3}>100%</Slot>
      <Slot $w={46} $ml={7}>
        <svg width="46" height="26" viewBox="0 0 46 26" fill="none" stroke="#fff" strokeWidth="2.500"><rect x="1.300" y="2" width="39" height="22" rx="4" /><path d="M44 9v8" strokeWidth="3" /><path d="M6 6h12l-7 14H6zM36 6h-7l-8 14h15z" fill="#fff" stroke="none" /><path d="M25 1L15 14h8l-5 11 12-14h-8z" fill="#fff" stroke="#333" strokeWidth="1.500" /></svg>
      </Slot>
      <Slot $w={34} $ml={30}><InputBox>拼</InputBox></Slot>
      <Slot $w={184} $ml={32} $left $ls={0.35}>Mon 10:10 PM</Slot>
      <Slot $w={32} $ml={38}>
        <svg width="30" height="30" viewBox="0 0 30 30" fill="none" stroke="#fff" strokeWidth="3"><circle cx="11.500" cy="11.500" r="9.500" /><path d="M18.500 18.500L28 28" strokeLinecap="round" /></svg>
      </Slot>
      <Slot $w={34} $ml={34}>
        <svg width="32" height="32" viewBox="0 0 32 32"><circle cx="16" cy="16" r="15" fill="#3c4aa5" stroke="#ddd" strokeWidth="1.500" /><path d="M7 8q10-7 18 3L16 16z" fill="#d64fa5" /><path d="M6 22q9 10 19-1l-9-5z" fill="#41b9e0" /><path d="M16 5l2 9 8 2-8 3-2 8-3-8-7-3 7-2z" fill="#e9f6fb" /></svg>
      </Slot>
      <Slot $w={38} $ml={21}>
        <svg width="36" height="22" viewBox="0 0 36 22" fill="#fff"><path d="M0 0h4v4H0zM8 0h28v4H8zM0 9h4v4H0zM8 9h22v4H8zM0 18h4v4H0zM8 18h28v4H8z" /></svg>
      </Slot>
    </MenuBar>
  );
}

export default function App() {
  return (
    <Desktop>
      <Global />
      <SystemMenu />
      <Browser>
        <TabStrip>
          <Lights><Light $c="#eb6459" /><Light $c="#dfbe4c" /><Light $c="#6fbf48" /></Lights>
          <BrowserTab icon={<JupyterRing />} title="ex2/" />
          <TabDivider />
          <BrowserTab icon={<NotebookIcon />} title="ex2 - Jupyter Notebook" />
          <TabDivider />
          <BrowserTab icon={<NotebookIcon />} title="ex1 - Jupyter Notebook" />
          <TabDivider />
          <BrowserTab icon={<NotebookIcon />} title="ex3 - Jupyter Notebook" />
          <TabDivider />
          <BrowserTab icon={<JudgeIcon />} title="堆的操作 - DSJudge" />
          <BrowserTab icon={<CatIcon />} title="iMiao" active />
          <BrowserTab icon={<FaGithub size={32} color="#161616" />} title="PICTURES/Screen Shot 20" fade />
          <StripEnd><MdAdd size={38} /></StripEnd>
        </TabStrip>
        <Toolbar>
          <NavButton><MdArrowBack size={38} /></NavButton>
          <NavButton $dim><MdArrowForward size={38} /></NavButton>
          <NavButton><MdRefresh size={39} /></NavButton>
          <Omnibox>
            <MdLock size={25} color="#e6e7e8" />
            <Address>icats.cc<Muted>/user</Muted></Address>
            <MdStarBorder size={35} color="#c7c9ca" />
          </Omnibox>
          <Extensions>
            {ext}
            <ExtDivider />
            <Avatar>G</Avatar>
            <svg width="32" height="32" viewBox="0 0 32 32"><circle cx="16" cy="16" r="16" fill="#e48a82" /><path d="M16 7l8 10h-5v7h-6v-7H8z" fill="#fff" /></svg>
          </Extensions>
        </Toolbar>
        <Page>
          <Sidebar>
            <Brand><MdPersonPinCircle size={57} /><BrandText>用户面板</BrandText></Brand>
            {groups.map(([title, links]) => (
              <React.Fragment key={title}>
                <GroupTitle>{title}</GroupTitle>
                {links.map(([Icon, label, color]) => (
                  <MenuLink key={label} $c={color}><Icon size={40} />{label}</MenuLink>
                ))}
              </React.Fragment>
            ))}
          </Sidebar>
          <Main>
            <TopBar><PowerLogo /></TopBar>
            <Content>
              <Card $h={456} $pt={17} $mb={46}>
                <Line>如订阅更新不出节点的请尝试更换备用订阅链接，多点几次更新或完成按钮，切换wifi或数据更新。并查看客户端订阅链接与配置中心是否一致 2019年12月23日</Line>
                <Rule $mt={47} />
                <Line $mt={51} $h={44}>域名：lovecat.cc 被ban，请使用：新域名 <Chip $big>www.icats.cc</Chip></Line>
                <Line $h={44}>临时域名<Chip $big>www.imaomi.me</Chip> 访问</Line>
                <Line $h={42}>备用域名①:<Chip $big>www.lovecats.cc</Chip></Line>
                <Line $c={RED}>请阅读下方提示收藏内容并将本站***主域名***以及***备用域名***添加到你的收藏！！！</Line>
                <Line>建议不要使用百度搜索爱喵云进入本站，如网址失效，请使用代理获取新网址，并查看你的收件箱及垃圾箱我们会下发通知邮件,并尝试使用备用域名访问本站（备用域名只会在主域名失效时才会启用）。</Line>
                <Line>2019年12月17日</Line>
              </Card>
              <Card $h={278} $pt={71} $mb={47}>
                <Stats>
                  {stats.map(([label, value, color]) => (
                    <div key={label}>
                      <StatLabel>{label}</StatLabel>
                      <StatValue $c={color}>{value}</StatValue>
                    </div>
                  ))}
                </Stats>
              </Card>
              <Columns>
                <Card $w={1344} $h={830} $pt={46} $shade>
                  <Heading $c={BLUE}>配置信息 &amp; 客户端下载</Heading>
                  <Line $c={RED}>使用前请认真阅读完此页所有公告！配置信息在此处下方，建议使用订阅配置客户端。</Line>
                  <Line>请先把本网站加入收藏夹，如遇到网站无法访问，请检查你的代理是否正常，域名失效我们会下发邮件</Line>
                  <Line>通知你，可查看你的邮箱（垃圾箱）查看下发的新网址。</Line>
                  <TabBar>
                    <TabButton $w={222} $bg="#3580f6" $active><MdOutlineInfo size={39} />使用须知</TabButton>
                    <TabButton $w={420} $bg="#68aa58"><MdLocalAirport size={39} />点我查看 配置/下载/教程</TabButton>
                  </TabBar>
                  <Notices>
                    <Line $c={BLUE}><Bullet />请注意：勿在任何公共平台（如贴吧/论坛/某些QQ群等）进行宣传/讨论，并拒绝分享账号，感</Line>
                    <Line $c={BLUE}>谢您的配合！！！并严禁在网吧等公共场所使用。</Line>
                    <Line $mt={40}><Bullet />现有节点数：38个，<Tint $c="#e7508c">查看详情</Tint>。节点变动：<Tint $c={RED}>新增 Je0-美国GIA 线路。</Tint></Line>
                    <Line $mt={40}><Bullet />注意！在使用中遇到问题请查看网站帮助中心。无法解决再使用在线咨询或提交工单。咨询邮</Line>
                    <Line>件:<Chip>iicats2017@gmail.com</Chip>或<Chip>mail@cat-lover.org</Chip>。</Line>
                  </Notices>
                </Card>
                <Card $w={1344} $h={830} $pt={46} $shade>
                  <Heading>使用前请仔细阅读收藏！</Heading>
                  <Line><Chip>www.imaomi.me</Chip>为本站临时域名，购买后请使用本站正式域名<Chip>www.icats.cc</Chip>(lovecat.cc 域名已失效)进行</Line>
                  <Line>访问</Line>
                  <Line>如遇到网站网址失效我们会及时通过邮件通知你新网址 ,你可以尝试开启ssr访问（切换代理模式为全局,</Line>
                  <Line>代理规则为全局，需要你的ssr运行正常）,</Line>
                  <Line>或使用本站备用域名①:<Chip>http://www.lovecats.cc</Chip></Line>
                  <Line $c={RED}>请你注意将上面几个域名收藏并保存，备用域名只会在网址确认失效时才会开启访问</Line>
                  <Line $mt={40}>或访问临时域名登陆,<Tint $c={RED}>同时本站还会下发新域名到你的邮箱，请先将</Tint><Chip>mail@imiao.info</Chip></Line>
                  <Line $c={RED}><Chip>mail@em7557.imiao.info</Chip>添加到你的邮箱白名单以保证正常接收。</Line>
                  <Line $mt={24}>请你在确定本站域名失效的情况下查看你的邮箱收件箱或垃圾箱查看下发的新域名。</Line>
                  <Rule $mt={47} />
                  <Line $mt={49} $c={RED}>禁止使用账号进行 垃圾邮件、DDOS、BT/PT下载、P2P等行为，尤其是下载版权电影（所有版权作品）</Line>
                  <Line $c={RED}>使用时请勿使用P2P下载工具（如迅雷）。迅雷，BT，PT，磁力等p2p下载工具在短时间内消耗掉你的</Line>
                  <Line $c={RED}>SS流量，造成封号</Line>
                </Card>
              </Columns>
            </Content>
          </Main>
          <ScrollTrack><ScrollThumb /></ScrollTrack>
        </Page>
      </Browser>
      <Dock>
        <DockApp name="finder" dot />
        <DockApp name="notes" />
        <DockApp name="reminders" />
        <DockApp name="maps" />
        <DockApp name="photos" />
        <DockApp name="appstore" badge="17" />
        <DockApp name="prefs" badge="1" />
        <DockApp name="chrome" dot />
        <DockApp name="vscode" dot />
        <DockApp name="bear" />
        <DockApp name="launchpad" />
        <DockDivider $h={74} $mt={36} />
        <DockApp name="terminal" dot />
        <DockApp name="search" dot />
        <DockApp name="grammarly" dot />
        <DockApp name="outlook" dot badge="64" />
        <DockApp name="word" dot />
        <DockApp name="ppt" dot />
        <DockApp name="qq" dot badge="1" />
        <DockApp name="clion" dot />
        <DockApp name="wechat" dot />
        <DockApp name="music" dot />
        <DockApp name="preview" dot />
        <DockDivider $h={110} $mt={18} />
        <DockApp name="stack" />
        <DockApp name="trash" />
      </Dock>
      <Gradients />
    </Desktop>
  );
}
